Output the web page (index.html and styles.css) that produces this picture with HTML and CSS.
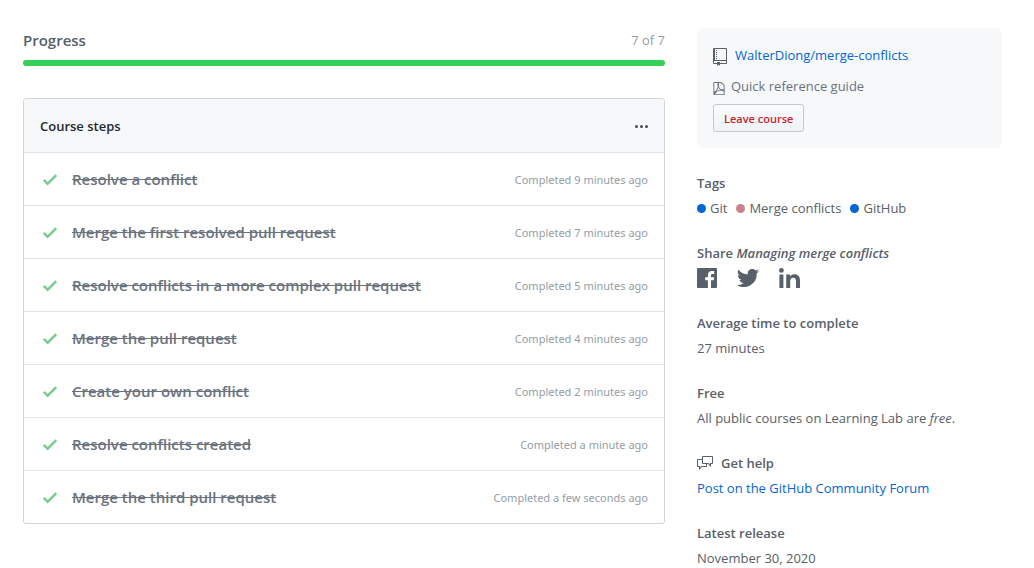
FILE: index.html
```html
<!DOCTYPE html>
<html lang="en">
<head>
<meta charset="utf-8">
<meta name="viewport" content="width=device-width, initial-scale=1">
<title>Managing merge conflicts</title>
<link rel="stylesheet" href="styles.css">
</head>
<body>
<svg class="sprite" aria-hidden="true">
  <symbol id="check" viewBox="0 0 12 16"><path fill-rule="evenodd" d="M12 5l-8 8-4-4 1.500-1.500L4 10l6.500-6.500L12 5z"/></symbol>
</svg>
<div class="page">
  <main class="main">
    <div class="progress-head">
      <h2 class="progress-title" id="progress-title">Progress</h2>
      <span class="progress-count">7 of 7</span>
    </div>
    <div class="progress-bar" role="progressbar" aria-labelledby="progress-title" aria-valuemin="0" aria-valuemax="7" aria-valuenow="7"><span class="progress-fill" style="width:100%"></span></div>
    <section class="steps">
      <header class="steps-head">
        <h3 class="steps-title">Course steps</h3>
        <button class="menu-button" type="button" aria-label="More options"><svg width="13" height="16" viewBox="0 0 13 16" fill="currentColor" aria-hidden="true"><path d="M1.500 9a1.500 1.500 0 100-3 1.500 1.500 0 000 3zm5 0a1.500 1.500 0 100-3 1.500 1.500 0 000 3zM13 7.500a1.500 1.500 0 11-3 0 1.500 1.500 0 013 0z"/></svg></button>
      </header>
      <ol class="step-list">
        <li class="step"><svg class="check"><use href="#check"/></svg><a class="step-name" href="#">Resolve a conflict</a><span class="step-time">Completed 9 minutes ago</span></li>
        <li class="step"><svg class="check"><use href="#check"/></svg><a class="step-name" href="#">Merge the first resolved pull request</a><span class="step-time">Completed 7 minutes ago</span></li>
        <li class="step"><svg class="check"><use href="#check"/></svg><a class="step-name" href="#">Resolve conflicts in a more complex pull request</a><span class="step-time">Completed 5 minutes ago</span></li>
        <li class="step"><svg class="check"><use href="#check"/></svg><a class="step-name" href="#">Merge the pull request</a><span class="step-time">Completed 4 minutes ago</span></li>
        <li class="step"><svg class="check"><use href="#check"/></svg><a class="step-name" href="#">Create your own conflict</a><span class="step-time">Completed 2 minutes ago</span></li>
        <li class="step"><svg class="check"><use href="#check"/></svg><a class="step-name" href="#">Resolve conflicts created</a><span class="step-time">Completed a minute ago</span></li>
        <li class="step"><svg class="check"><use href="#check"/></svg><a class="step-name" href="#">Merge the third pull request</a><span class="step-time">Completed a few seconds ago</span></li>
      </ol>
    </section>
  </main>
  <aside class="side">
    <div class="card">
      <a class="repo" href="#"><svg class="repo-icon" width="14" height="18" viewBox="0 0 14 18" fill="currentColor" aria-hidden="true"><path fill-rule="evenodd" d="M1 0h12a1 1 0 011 1v14a1 1 0 01-1 1H7v2l-1.500-1.500L4 18v-2H1a1 1 0 01-1-1V1a1 1 0 011-1zM2 1v11h11V1zM1 13v2h3v-1h3v1h6v-2z"/><path d="M3 2h1v1H3zM3 4h1v1H3zM3 6h1v1H3zM3 8h1v1H3zM3 10h1v1H3z"/></svg>WalterDiong/merge-conflicts</a>
      <a class="guide" href="#"><svg class="guide-icon" width="12" height="15" viewBox="0 0 12 16" fill="currentColor" aria-hidden="true"><path fill-rule="evenodd" d="M8.500 1H1a1 1 0 00-1 1v12a1 1 0 001 1h10a1 1 0 001-1V4.500L8.500 1zM1 2h4a.68.68 0 00-.31.2 1.080 1.080 0 00-.23.470 4.220 4.220 0 00-.09 1.470c.06.609.173 1.211.34 1.800A21.780 21.780 0 013.600 8.600c-.5 1-.8 1.660-.91 1.840a7.156 7.156 0 00-.69.300 4.190 4.190 0 00-1 .64V2zm4.420 4.800a5.650 5.650 0 001.170 2.090c.275.237.595.417.940.530-.64.090-1.230.200-1.810.330-.618.150-1.223.347-1.810.590s.22-.440.610-1.250c.365-.74.670-1.510.910-2.300l-.01.010zM11 14H1.500a.743.743 0 01-.17 0 2.120 2.120 0 00.730-.440 10.140 10.140 0 001.780-2.380c.31-.130.580-.230.810-.310l.42-.140c.45-.130.940-.230 1.440-.330s1-.160 1.480-.200c.447.216.912.394 1.390.530.403.110.814.188 1.230.230h.38V14H11zm0-4.860a3.740 3.740 0 00-.64-.280 4.221 4.221 0 00-.75-.110c-.411.003-.822.030-1.230.080a3 3 0 01-1.840-1.640 6.070 6.070 0 01-.6-1.840c.052-.377.086-.76.100-1.140.070-.409.070-.831 0-1.240A.88.88 0 005.500 2H8l3 3v4.140z"/></svg>Quick reference guide</a>
      <button class="leave" type="button">Leave course</button>
    </div>
    <section class="info">
      <h3 class="info-title">Tags</h3>
      <ul class="tags">
        <li class="tag"><span class="dot"></span>Git</li>
        <li class="tag"><span class="dot dot-pink"></span>Merge conflicts</li>
        <li class="tag"><span class="dot"></span>GitHub</li>
      </ul>
    </section>
    <section class="info">
      <h3 class="info-title">Share <em>Managing merge conflicts</em></h3>
      <div class="share">
        <a class="share-link" href="#" aria-label="Share on Facebook"><svg width="20" height="20" viewBox="0 0 20 20" fill="currentColor"><path d="M1 0h18a1 1 0 011 1v18a1 1 0 01-1 1h-5v-7.700h2.700l.4-3H14V7.400c0-.9.300-1.500 1.500-1.500h1.700V3.100c-.3 0-1.200-.1-2.300-.1-2.400 0-4 1.400-4 4.100v2.200H8.200v3h2.700V20H1a1 1 0 01-1-1V1a1 1 0 011-1z"/></svg></a>
        <a class="share-link" href="#" aria-label="Share on Twitter"><svg width="22" height="18" viewBox="0 0 22 18" fill="currentColor"><path d="M22 2.100c-.8.400-1.700.600-2.600.700.900-.6 1.700-1.400 2-2.500-.9.500-1.800.9-2.900 1.100A4.500 4.500 0 0010.800 5.500 12.800 12.800 0 011.500.8a4.500 4.500 0 001.400 6c-.7 0-1.400-.2-2-.5v.1c0 2.200 1.500 4 3.600 4.400-.7.200-1.400.2-2 .1.600 1.800 2.200 3.100 4.200 3.100A9.100 9.100 0 010 15.900 12.800 12.800 0 0019.700 4.500c.9-.7 1.700-1.500 2.300-2.400z"/></svg></a>
        <a class="share-link" href="#" aria-label="Share on LinkedIn"><svg width="21" height="20" viewBox="0 0 21 20" fill="currentColor"><circle cx="2.400" cy="2.400" r="2.400"/><path d="M.4 6.600h4V20h-4zM7.200 6.600H11v1.900c.6-1.100 2-2.200 4.100-2.200 4.200 0 5.900 2.500 5.900 6.400V20h-4v-6.500c0-1.800-.4-3.700-2.700-3.700-2.400 0-3.100 1.800-3.100 3.700V20h-4z"/></svg></a>
      </div>
    </section>
    <section class="info">
      <h3 class="info-title">Average time to complete</h3>
      <p class="info-text">27 minutes</p>
    </section>
    <section class="info">
      <h3 class="info-title">Free</h3>
      <p class="info-text">All public courses on Learning Lab are <em>free</em>.</p>
    </section>
    <section class="info">
      <h3 class="info-title info-title-icon"><svg width="16" height="16" viewBox="0 0 16 16" fill="currentColor" aria-hidden="true"><path fill-rule="evenodd" d="M15 1H6c-.55 0-1 .45-1 1v2H1c-.55 0-1 .45-1 1v6c0 .55.45 1 1 1h1v3l3-3h4c.55 0 1-.45 1-1V9h1l3 3V9h1c.55 0 1-.45 1-1V2c0-.55-.45-1-1-1zM9 11H4.500L3 12.500V11H1V5h4v3c0 .55.45 1 1 1h3v2zm6-3h-2v1.500L11.500 8H6V2h9v6z"/></svg>Get help</h3>
      <p class="info-text"><a class="link" href="#">Post on the GitHub Community Forum</a></p>
    </section>
    <section class="info">
      <h3 class="info-title">Latest release</h3>
      <p class="info-text">November 30, 2020</p>
    </section>
  </aside>
</div>
</body>
</html>
```
FILE: styles.css
```css
* { box-sizing: border-box; }
body {
  margin: 0;
  background: #fff;
  color: #586069;
  font-family: "Open Sans", "Noto Sans", sans-serif;
  font-size: 13px;
  line-height: 20px;
}
h2, h3, p, ul, ol { margin: 0; padding: 0; }
ul, ol { list-style: none; }
a { color: inherit; text-decoration: none; }
button { font-family: inherit; cursor: pointer; }
svg { flex: none; }
.sprite { position: absolute; width: 0; height: 0; }

.page {
  display: grid;
  grid-template-columns: minmax(0, 642fr) minmax(0, 305fr);
  gap: 32px;
  padding: 28px 32px 0 23px;
}

.progress-head { display: flex; justify-content: space-between; height: 32px; }
.progress-title { font-size: 15px; font-weight: 600; line-height: 24px; }
.progress-count { color: #959da5; line-height: 24px; }
.progress-bar { display: flex; height: 6px; border-radius: 3px; overflow: hidden; background: #e1e4e8; }
.progress-fill { background: #34d058; }

.steps { margin-top: 32px; border: 1px solid #d1d5da; border-radius: 3px; overflow: hidden; }
.steps-head {
  display: flex;
  align-items: center;
  justify-content: space-between;
  padding: 17px 16px 15px;
  background: #f6f8fa;
}
.steps-title { color: #24292e; font-size: 13px; font-weight: 600; line-height: 21px; }
.menu-button { display: flex; padding: 0; border: 0; background: none; color: #444d56; }
.step {
  display: flex;
  align-items: center;
  padding: 14px 16px;
  border-top: 1px solid #e1e4e8;
  line-height: 24px;
}
.check { width: 20px; height: 19px; margin-right: 12px; fill: #7bcb8f; }
.step-name { flex: 1; color: #6a737d; font-size: 15px; font-weight: 600; text-decoration: line-through; }
.step-time { padding-top: 1px; color: #959da5; font-family: "Noto Sans", sans-serif; font-size: 11px; line-height: 23px; }

.card {
  display: flex;
  flex-direction: column;
  align-items: flex-start;
  padding: 16px;
  border-radius: 6px;
  background: #f6f8fa;
}
.repo { display: flex; align-items: flex-end; gap: 8px; line-height: 22px; color: #0366d6; }
.repo-icon { color: #586069; }
.guide { display: flex; align-items: flex-end; gap: 6px; margin: 10px 0 8px; color: #6a737d; }
.leave {
  height: 28px;
  padding: 0 10px;
  border: 1px solid #c5c9cd;
  border-radius: 3px;
  background: linear-gradient(#fafbfc, #eff3f6);
  color: #cb2431;
  font-size: 11px;
  font-weight: 600;
}

.info { margin-top: 25px; }
.info-title { margin-bottom: 5px; font-size: 13px; font-weight: 600; line-height: 20px; }
.info-title-icon { display: flex; align-items: center; gap: 8px; }
.tags { display: flex; gap: 9px; }
.tag { display: flex; align-items: center; gap: 4px; }
.dot { width: 9px; height: 9px; border-radius: 50%; background: #0366d6; }
.dot-pink { background: #c9818f; }
.share { display: flex; align-items: center; gap: 20px; height: 20px; }
.share-link { display: flex; }
.link { color: #0366d6; }
```
